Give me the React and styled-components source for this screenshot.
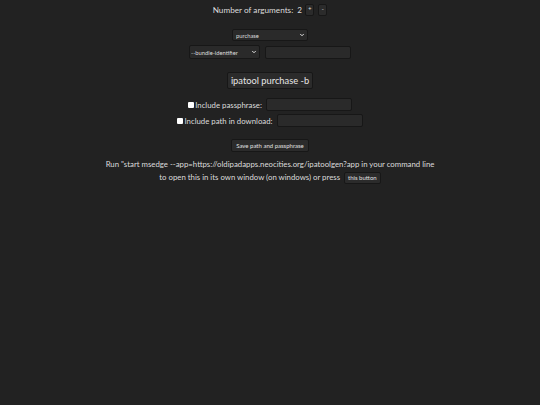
import React from "react";
import styled, { createGlobalStyle } from "styled-components";
import { ChevronDown } from "lucide-react";

const Global = createGlobalStyle`
  html, body { margin: 0; padding: 0; background: #222222; }
  body {
    color: #dcdcdc;
    font-family: "Lato", "Open Sans", sans-serif;
    font-size: 7.8px;
  }
`;

const Page = styled.div`
  min-height: 405px;
  display: flex;
  flex-direction: column;
  align-items: center;
  padding-top: 4px;
  box-sizing: border-box;
`;

const Row = styled.div`
  display: flex;
  align-items: center;
  justify-content: center;
  gap: ${(p) => p.$gap || 4}px;
  margin-top: ${(p) => p.$mt || 0}px;
`;

const Label = styled.span`
  font-size: 8.2px;
  line-height: 12px;
  white-space: nowrap;
`;

const SmallButton = styled.button`
  box-sizing: border-box;
  height: ${(p) => p.$h || 12}px;
  min-width: ${(p) => p.$w || 9}px;
  padding: 0 ${(p) => p.$px || 2}px;
  background: #2b2b2b;
  border: 1.5px solid #171717;
  border-radius: 2px;
  color: #e0e0e0;
  font-family: "Lato", "Open Sans", sans-serif;
  font-size: ${(p) => p.$fs || 5.5}px;
  line-height: 1;
  display: inline-flex;
  align-items: center;
  justify-content: center;
  vertical-align: middle;
  cursor: pointer;
`;

const SelectWrap = styled.div`
  position: relative;
  width: ${(p) => p.$w}px;
  height: ${(p) => p.$h}px;
`;

const Select = styled.select`
  appearance: none;
  -webkit-appearance: none;
  box-sizing: border-box;
  width: 100%;
  height: 100%;
  background: #2a2a2a;
  border: 1.5px solid #171717;
  border-radius: 2px;
  color: #dedede;
  font-family: "Lato", "Open Sans", sans-serif;
  font-size: 5.8px;
  padding: 0 0 0 ${(p) => p.$pl || 3}px;
  outline: none;
`;

const Chevron = styled(ChevronDown)`
  position: absolute;
  right: 3px;
  top: 50%;
  transform: translateY(-50%);
  width: 6px;
  height: 6px;
  color: #e0e0e0;
  pointer-events: none;
`;

const TextInput = styled.input`
  box-sizing: border-box;
  width: 86px;
  height: 13px;
  background: #2a2a2a;
  border: 1.5px solid #171717;
  border-radius: 2px;
  outline: none;
`;

const Command = styled.div`
  margin-top: 13px;
  box-sizing: border-box;
  height: 17px;
  padding: 0 3px;
  display: flex;
  align-items: center;
  background: #2b2b2b;
  border: 1.5px solid #171717;
  border-radius: 2px;
  color: #e6e6e6;
  font-size: 9.3px;
`;

const CheckLabel = styled.label`
  display: flex;
  align-items: center;
  gap: 1px;
  font-size: 7.8px;
  white-space: nowrap;
`;

const Check = styled.input`
  appearance: none;
  -webkit-appearance: none;
  width: 6px;
  height: 6px;
  margin: 0;
  background: #ffffff;
  border-radius: 1px;
`;

const Para = styled.p`
  margin: 6px 0 0;
  text-align: center;
  font-size: 7.8px;
  line-height: 13px;
`;

export default function App() {
  return (
    <>
      <Global />
      <Page>
        <Row $gap={3}>
          <Label>Number of arguments:&nbsp; 2</Label>
          <Row $gap={4}>
            <SmallButton>+</SmallButton>
            <SmallButton>-</SmallButton>
          </Row>
        </Row>

        <Row $mt={13}>
          <SelectWrap $w={76} $h={12}>
            <Select $pl={3} defaultValue="purchase">
              <option value="purchase">purchase</option>
            </Select>
            <Chevron strokeWidth={4} />
          </SelectWrap>
        </Row>

        <Row $mt={4} $gap={5}>
          <SelectWrap $w={71} $h={14}>
            <Select $pl={1} defaultValue="bundle">
              <option value="bundle">--bundle-identifier</option>
            </Select>
            <Chevron strokeWidth={4} />
          </SelectWrap>
          <TextInput type="text" />
        </Row>

        <Command>ipatool purchase -b</Command>

        <Row $mt={9} $gap={4}>
          <CheckLabel>
            <Check type="checkbox" />
            Include passphrase:
          </CheckLabel>
          <TextInput type="text" />
        </Row>

        <Row $mt={3} $gap={4}>
          <CheckLabel>
            <Check type="checkbox" />
            Include path in download:
          </CheckLabel>
          <TextInput type="text" />
        </Row>

        <Row $mt={12}>
          <SmallButton $h={13} $px={4} $fs={6}>Save path and passphrase</SmallButton>
        </Row>

        <Para>
          Run "start msedge --app=https://oldipadapps.neocities.org/ipatoolgen?app in your command line
          <br />
          to open this in its own window (on windows) or press&nbsp;{" "}
          <SmallButton $h={12} $px={3} $fs={6}>this button</SmallButton>
        </Para>
      </Page>
    </>
  );
}
